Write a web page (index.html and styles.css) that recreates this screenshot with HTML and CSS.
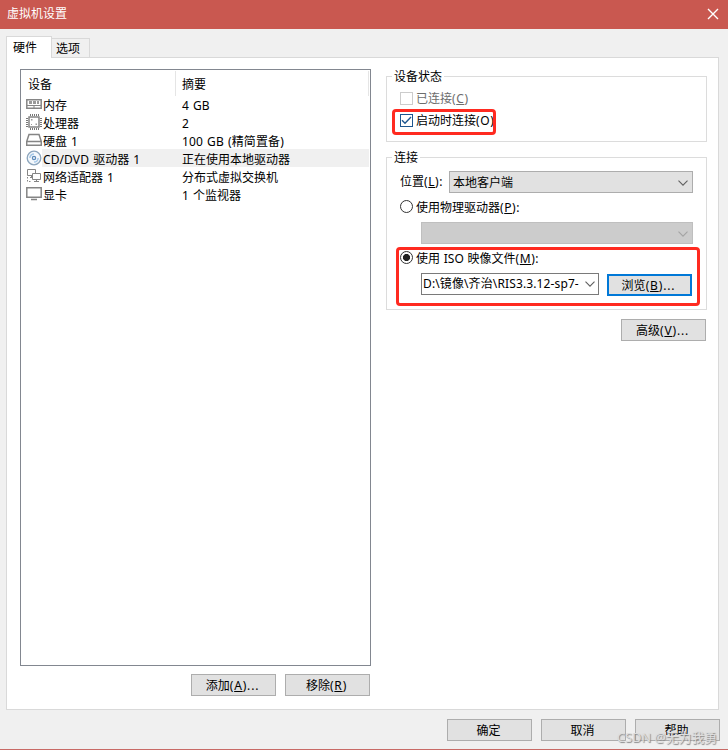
FILE: index.html
```html
<!DOCTYPE html>
<html lang="zh-CN">
<head>
<meta charset="utf-8">
<title>虚拟机设置</title>
<link rel="stylesheet" href="styles.css">
</head>
<body>
<div class="window">
  <header class="titlebar">
    <span>虚拟机设置</span>
    <svg class="close" width="12" height="12" viewBox="0 0 12 12"><path d="M1 1L11 11M11 1L1 11"/></svg>
  </header>
  <nav class="tabs">
    <div class="tab active">硬件</div>
    <div class="tab">选项</div>
  </nav>
  <main class="panel">
    <section class="left">
      <div class="list">
        <div class="row head"><span class="name">设备</span><span class="summary">摘要</span></div>
        <div class="row">
          <svg class="icon" viewBox="0 0 16 16"><path class="thick" d="M.8 3.8H15.2V12.2H.8Z"/><path class="fill" d="M3 5h3v3H3zM7 5h3v3H7zM11 5h2v3h-2z"/><path d="M1 9.5H15M8 9.5V12"/></svg>
          <span class="name">内存</span><span class="summary">4 GB</span>
        </div>
        <div class="row">
          <svg class="icon" viewBox="0 0 16 16"><path class="thick" d="M3 3H13V13H3Z"/><path class="pins" d="M4.5 0V2M6.5 0V2M8.5 0V2M10.5 0V2M12.5 0V2M4.5 14V16M6.5 14V16M8.5 14V16M10.5 14V16M12.5 14V16M0 4.5H2M0 6.5H2M0 8.5H2M0 10.5H2M0 12.5H2M14 4.5H16M14 6.5H16M14 8.5H16M14 10.5H16M14 12.5H16"/><path class="fill" d="M5 5h1.5v1.5H5zM9.5 9.5h1.5v1.5H9.5zM5 10h1v1H5z"/></svg>
          <span class="name">处理器</span><span class="summary">2</span>
        </div>
        <div class="row">
          <svg class="icon" viewBox="0 0 16 16"><path class="thick" d="M3 2.5H13L15.3 9.5V13.3H.7V9.5ZM.7 9.5H15.3"/></svg>
          <span class="name">硬盘 1</span><span class="summary wide">100 GB (精简置备)</span>
        </div>
        <div class="row selected">
          <svg class="icon disc" viewBox="0 0 16 16"><circle class="plate" cx="8" cy="8" r="6.8"/><circle class="ring" cx="8" cy="8" r="1.6"/><path class="glint" d="M8 3.9A4.1 4.1 0 0 0 3.9 8M8 12.1A4.1 4.1 0 0 0 12.1 8"/></svg>
          <span class="name"><b class="cd">CD/DVD</b> 驱动器 1</span><span class="summary">正在使用本地驱动器</span>
        </div>
        <div class="row">
          <svg class="icon" viewBox="0 0 16 16"><path d="M1.5 1.5H9.5V7.5H1.5ZM4 9.5H7M5.5 8V9"/><path class="screen" d="M6.5 5.5H14.5V11.5H6.5ZM8 13.5H13M10.5 12V13"/><path class="dots" d="M1.5 9V13.5H6"/></svg>
          <span class="name">网络适配器 1</span><span class="summary">分布式虚拟交换机</span>
        </div>
        <div class="row">
          <svg class="icon" viewBox="0 0 16 16"><path class="thick" d="M.8 1.8H15.2V11.2H.8ZM5 13.5H11"/></svg>
          <span class="name">显卡</span><span class="summary">1 个监视器</span>
        </div>
      </div>
      <div class="actions">
        <div class="button"><span>添加<span class="key">(<u>A</u>)...</span></span></div>
        <div class="button"><span>移除<span class="key">(<u>R</u>)</span></span></div>
      </div>
    </section>
    <section class="right">
      <div class="group status">
        <div class="legend">设备状态</div>
        <div class="option disabled"><i class="check"></i><span>已连接<span class="key-s">(<u>C</u>)</span></span></div>
        <div class="option startup"><i class="check on"><svg width="11" height="11" viewBox="0 0 11 11"><path d="M1 5.2L4 8.2L10 2"/></svg></i><span class="clip">启动时连接<span class="key-s">(O)</span></span></div>
        <div class="mark mark-status"></div>
      </div>
      <div class="group connection">
        <div class="legend">连接</div>
        <div class="location"><span class="label">位置<span class="key-s">(<u>L</u>):</span></span>
          <div class="select"><span>本地客户端</span><svg class="chev" width="10" height="6" viewBox="0 0 10 6"><path d="M.5 .7L5 5.2L9.5 .7"/></svg></div>
        </div>
        <div class="option physical"><i class="radio"></i><span>使用物理驱动器<span class="key-s">(<u>P</u>):</span></span></div>
        <div class="select off"><svg class="chev" width="10" height="6" viewBox="0 0 10 6"><path d="M.5 .7L5 5.2L9.5 .7"/></svg></div>
        <div class="option iso"><i class="radio on"></i><span>使用 ISO 映像文件<span class="key-s">(<u>M</u>):</span></span></div>
        <div class="file">
          <div class="select edit"><span>D:\镜像\齐治\RIS3.3.12-sp7-</span><svg class="chev" width="10" height="6" viewBox="0 0 10 6"><path d="M.5 .7L5 5.2L9.5 .7"/></svg></div>
          <div class="button focus"><span>浏览<span class="key">(<u>B</u>)...</span></span></div>
        </div>
        <div class="mark mark-iso"></div>
      </div>
      <div class="button advanced"><span>高级<span class="key">(<u>V</u>)...</span></span></div>
    </section>
  </main>
  <footer class="footer">
    <div class="button"><span>确定</span></div>
    <div class="button"><span>取消</span></div>
    <div class="button"><span>帮助</span></div>
    <div class="watermark">CSDN @无为我勇</div>
  </footer>
</div>
</body>
</html>
```
FILE: styles.css
```css
* { box-sizing: border-box; }
body {
  margin: 0;
  font: 12px/18px "Noto Sans", "Noto Sans CJK SC", sans-serif;
  color: #000;
}
.window {
  position: relative;
  width: 728px;
  height: 750px;
  background: #f0f0f0;
  border-bottom: 1px solid #c86a66;
  overflow: hidden;
  white-space: nowrap;
}
.titlebar {
  display: flex;
  align-items: center;
  justify-content: space-between;
  height: 29px;
  padding: 0 9px 2px 7px;
  background: #c95850;
  color: #fff;
}
.close path { fill: none; stroke: #fff; stroke-width: 1.4; }
.tabs {
  display: flex;
  align-items: flex-end;
  height: 29px;
  padding-left: 6px;
}
.tab {
  width: 38px;
  height: 20px;
  padding: 1px 0 0 4px;
  border: 1px solid #d9d9d9;
  border-left: 0;
}
.tab.active {
  position: relative;
  z-index: 1;
  width: 46px;
  height: 22px;
  padding: 2px 0 0 6px;
  border: 1px solid #d9d9d9;
  border-bottom: 0;
  background: #fff;
}
.panel {
  display: flex;
  gap: 15px;
  width: 713px;
  height: 653px;
  margin: -1px 0 0 6px;
  padding: 11px 11px 0 13px;
  background: #fff;
  border: 1px solid #d9d9d9;
}
.left { width: 351px; }
.list {
  height: 597px;
  padding: 1px;
  border: 1px solid #828790;
}
.row {
  display: flex;
  align-items: center;
  height: 18px;
  padding-left: 4px;
}
.row.head { height: 25px; padding: 2px 0 0 6px; }
.head .name { width: 147px; }
.head .summary {
  flex: 1;
  height: 25px;
  margin-top: -2px;
  padding: 5px 0 0 6px;
  border-left: 1px solid #e5e5e5;
  border-right: 1px solid #e5e5e5;
}
.icon { width: 16px; height: 16px; margin-top: -2px; flex: none; }
.icon path, .icon circle { fill: none; stroke: #858585; stroke-width: 1; }
.icon .thick { stroke-width: 1.5; }
.icon .pins { stroke: #777; }
.icon .fill { fill: #999; stroke: none; }
.icon .screen { fill: #fff; }
.icon .dots { stroke-dasharray: 1.5 1.5; }
.icon .plate { stroke: #8ca5bd; fill: #f4f8fc; stroke-width: 1.3; }
.icon .ring { stroke: #5f8cba; stroke-width: 1.3; }
.icon .glint { stroke: #a5c8e8; stroke-width: 1.5; }
.row .icon + .name { width: 140px; padding-left: 1px; }
.row:not(.head) .name, .row:not(.head) .summary { height: 18px; line-height: 19px; word-spacing: 1px; }
.selected { background: linear-gradient(to right, #fff 20px, #f0f0f0 20px); position: relative; top: -1px; }
.selected .icon { margin-top: 0; }
.selected .name, .selected .summary { position: relative; top: 1px; }
.cd { font-weight: normal; letter-spacing: .1px; }
.wide { letter-spacing: .1px; }
.actions {
  display: flex;
  justify-content: flex-end;
  gap: 9px;
  padding: 8px 1px 0 0;
}
.button {
  display: flex;
  align-items: center;
  justify-content: center;
  flex: none;
  width: 85px;
  height: 22px;
  padding: 2px 2px 0 0;
  background: #e1e1e1;
  border: 1px solid #adadad;
}
.key { letter-spacing: .85px; }
.key-s { letter-spacing: .6px; }
u { text-underline-offset: 1px; text-decoration-thickness: 1px; }
.right {
  display: flex;
  flex-direction: column;
  align-items: flex-end;
  width: 321px;
  padding-top: 7px;
}
.group {
  position: relative;
  width: 321px;
  border: 1px solid #dcdcdc;
}
.legend {
  width: max-content;
  height: 18px;
  line-height: 20px;
  margin: -10px 0 0 5px;
  padding: 0 2px;
  background: #fff;
}
.status { height: 66px; margin-bottom: 15px; }
.connection { height: 153px; margin-bottom: 9px; }
.option { display: flex; align-items: center; gap: 3px; padding-left: 13px; height: 18px; }
.option > span { line-height: 19px; }
.status .option { margin-top: 4px; }
.status .disabled { margin-top: 4px; color: #6d6d6d; }
.check, .radio { flex: none; width: 13px; height: 13px; border: 1px solid #333; background: #fff; }
.disabled .check { border-color: #ccc; }
.check.on { border-color: #1d568f; }
.check svg { display: block; }
.check path { fill: none; stroke: #1d568f; stroke-width: 1.4; }
.clip { width: 79px; overflow: hidden; }
.radio { border-radius: 50%; margin-top: -1px; }
.radio.on { background: radial-gradient(circle, #222 3.2px, #fff 3.9px); }
.location { display: flex; align-items: center; padding: 5px 13px 0 13px; }
.location .label { width: 49px; }
.select {
  display: flex;
  align-items: center;
  justify-content: space-between;
  width: 244px;
  height: 22px;
  padding: 2px 4px 0 3px;
  background: #e1e1e1;
  border: 1px solid #adadad;
}
.chev { flex: none; margin-top: -1px; }
.chev path { fill: none; stroke: #606060; stroke-width: 1.1; }
.select.off {
  width: 272px;
  margin: 6px 0 0 34px;
  justify-content: flex-end;
  background: #ccc;
  border-color: #bfbfbf;
}
.off .chev path { stroke: #a4a4a4; }
.physical { margin-top: 5px; }
.iso { margin-top: 5px; word-spacing: .6px; }
.file { display: flex; gap: 8px; padding: 6px 0 0 34px; }
.select.edit { width: 178px; padding: 0 3px 0 1px; background: #fff; border-color: #7a7a7a; letter-spacing: .12px; }
.button.focus { margin-top: 1px; height: 22px; border: 2px solid #0078d7; }
.advanced { margin-right: 1px; }
.mark {
  position: absolute;
  border: 3px solid #ff2a20;
  border-radius: 4px;
}
.mark-status { left: 5px; top: 32px; width: 104px; height: 26px; }
.mark-iso { left: 9px; top: 89px; width: 304px; height: 59px; }
.status, .connection { left: 0; }
.footer {
  position: relative;
  display: flex;
  justify-content: flex-end;
  gap: 9px;
  padding: 9px 8px 0 0;
}
.watermark {
  position: absolute;
  right: 11px;
  top: 18px;
  color: #dedede;
  font-size: 12.8px;
  text-shadow: 1px 1px 1px #888;
}
```
